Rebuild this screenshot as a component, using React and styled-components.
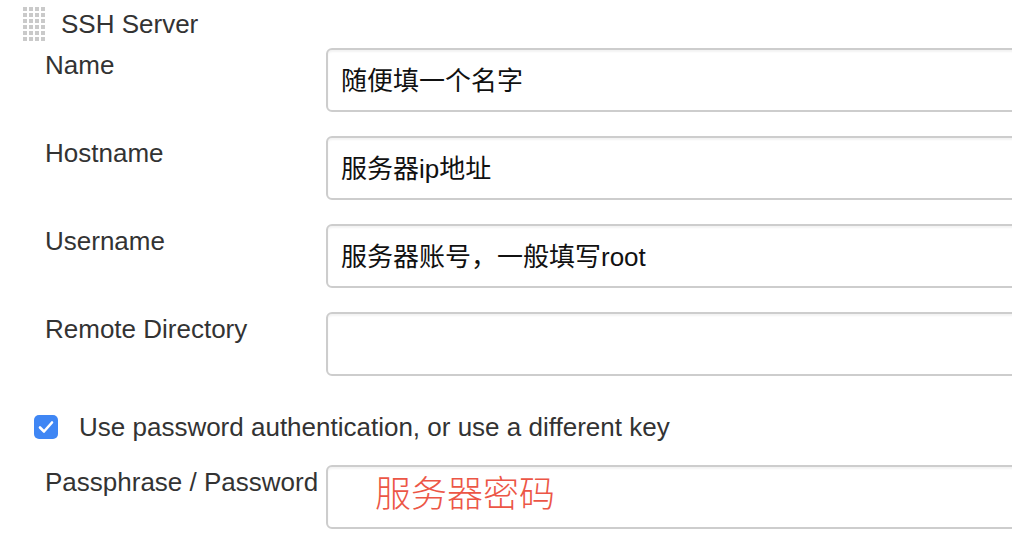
import React from 'react';
import styled, { createGlobalStyle } from 'styled-components';

const GlobalStyle = createGlobalStyle`
  html, body {
    margin: 0;
    padding: 0;
    background: #fff;
    overflow: hidden;
  }
  body {
    font-family: "Liberation Sans", Arial, "Noto Sans CJK SC", sans-serif;
    color: #333;
  }
`;

const Page = styled.div`
  width: 1012px;
  height: 544px;
  overflow: hidden;
`;

const Header = styled.div`
  display: flex;
  align-items: center;
  height: 48px;
  padding-left: 23px;
  box-sizing: border-box;
`;

const Title = styled.span`
  margin-left: 16px;
  font-size: 26px;
  line-height: 30px;
  color: #333;
`;

const Form = styled.div`
  display: flex;
  flex-direction: column;
  padding-left: 45px;
`;

const Row = styled.div`
  display: flex;
  align-items: flex-start;
  margin-bottom: ${p => p.$gap ?? 24}px;
`;

const Label = styled.label`
  width: 281px;
  flex-shrink: 0;
  padding-top: 2px;
  font-size: 26px;
  line-height: 30px;
  color: #333;
  white-space: nowrap;
`;

const Field = styled.div`
  width: 740px;
  height: 64px;
  box-sizing: border-box;
  flex-shrink: 0;
  display: flex;
  align-items: center;
  padding-left: ${p => p.$indent ?? 13}px;
  padding-bottom: ${p => p.$lift ?? 4}px;
  border: 2px solid #cdcdcd;
  border-radius: 6px;
  box-shadow: inset 0 2px 2px rgba(0, 0, 0, 0.05);
  font-family: "Liberation Sans", Arial, "Noto Sans CJK SC", sans-serif;
  font-size: ${p => p.$size ?? 26}px;
  font-weight: ${p => p.$weight ?? 400};
  color: ${p => p.$color ?? '#111'};
  white-space: nowrap;
`;

const CheckRow = styled.div`
  display: flex;
  align-items: center;
  height: 30px;
  margin: 36px 0 23px -11px;
`;

const Box = styled.span`
  width: 24px;
  height: 24px;
  border-radius: 5px;
  background: #3f86f4;
  display: flex;
  align-items: center;
  justify-content: center;
  flex-shrink: 0;
`;

const CheckText = styled.span`
  margin-left: 21px;
  font-size: 26px;
  line-height: 30px;
  color: #333;
  white-space: nowrap;
`;

function Handle() {
  const dots = [];
  for (let r = 0; r < 6; r++) {
    for (let c = 0; c < 4; c++) {
      dots.push(<rect key={`${r}-${c}`} x={c * 6} y={r * 6} width="4" height="4" fill="#cacaca" />);
    }
  }
  return (
    <svg width="22" height="34" viewBox="0 0 22 34">
      {dots}
    </svg>
  );
}

const fields = [
  { label: 'Name', value: '随便填一个名字' },
  { label: 'Hostname', value: '服务器ip地址' },
  { label: 'Username', value: '服务器账号，一般填写root' },
  { label: 'Remote Directory', value: '' },
];

export default function App() {
  return (
    <Page>
      <GlobalStyle />
      <Header>
        <Handle />
        <Title>SSH Server</Title>
      </Header>
      <Form>
        {fields.map((f, i) => (
          <Row key={f.label} $gap={i === fields.length - 1 ? 0 : 24}>
            <Label>{f.label}</Label>
            <Field>{f.value}</Field>
          </Row>
        ))}
        <CheckRow>
          <Box>
            <svg width="16" height="14" viewBox="0 0 16 14">
              <path d="M2 7.5 L6 11.5 L14 2.5" fill="none" stroke="#fff" strokeWidth="2.6" strokeLinecap="round" strokeLinejoin="round" />
            </svg>
          </Box>
          <CheckText>Use password authentication, or use a different key</CheckText>
        </CheckRow>
        <Row $gap={0}>
          <Label>Passphrase / Password</Label>
          <Field $indent={47} $size={36} $weight={300} $color="#ec5646" $lift={12}>服务器密码</Field>
        </Row>
      </Form>
    </Page>
  );
}
